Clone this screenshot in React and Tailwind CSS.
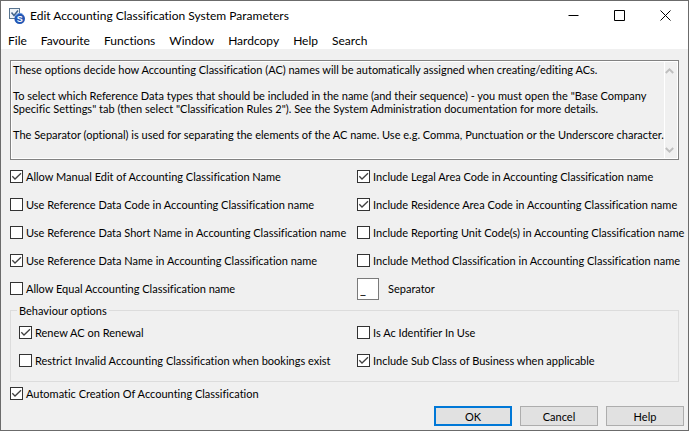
import { useState } from 'react'

const MENUS = ['File', 'Favourite', 'Functions', 'Window', 'Hardcopy', 'Help', 'Search']

const HELP_TEXT = `These options decide how Accounting Classification (AC) names will be automatically assigned when creating/editing ACs.

To select which Reference Data types that should be included in the name (and their sequence) - you must open the "Base Company
Specific Settings" tab (then select "Classification Rules 2"). See the System Administration documentation for more details.

The Separator (optional) is used for separating the elements of the AC name. Use e.g. Comma, Punctuation or the Underscore character.`

const NAME_OPTIONS = [
  { label: 'Allow Manual Edit of Accounting Classification Name', checked: true },
  { label: 'Include Legal Area Code in Accounting Classification name', checked: true },
  { label: 'Use Reference Data Code in Accounting Classification name', checked: false },
  { label: 'Include Residence Area Code in Accounting Classification name', checked: true },
  { label: 'Use Reference Data Short Name in Accounting Classification name', checked: false },
  { label: 'Include Reporting Unit Code(s) in Accounting Classification name', checked: false },
  { label: 'Use Reference Data Name in Accounting Classification name', checked: true },
  { label: 'Include Method Classification in Accounting Classification name', checked: false },
  { label: 'Allow Equal Accounting Classification name', checked: false },
]

const BEHAVIOUR_OPTIONS = [
  { label: 'Renew AC on Renewal', checked: true },
  { label: 'Is Ac Identifier In Use', checked: false },
  { label: 'Restrict Invalid Accounting Classification when bookings exist', checked: false },
  { label: 'Include Sub Class of Business when applicable', checked: true },
]

function AppIcon() {
  return (
    <svg width="18" height="18" viewBox="0 0 18 18" aria-hidden="true">
      <rect x="1.5" y="1.5" width="10" height="10" fill="#eef3f8" stroke="#58748f" />
      <path d="M3.5 5.5l2.5 3 4-5" fill="none" stroke="#41648c" strokeWidth="1.5" />
      <circle cx="11.7" cy="11.7" r="5.3" fill="#2257b5" />
      <path d="M7.7 9.2a4.5 4.5 0 0 1 7.5-1.5" fill="none" stroke="#5f93e0" />
      <text x="11.7" y="15" textAnchor="middle" fontSize="9" fontWeight="bold" fontFamily="Liberation Sans, sans-serif" fill="#fff">
        S
      </text>
    </svg>
  )
}

function CaptionButton({ label, children }) {
  return (
    <button type="button" aria-label={label} className="flex h-full w-[46px] items-center justify-center hover:bg-[#e5e5e5]">
      <svg width="11" height="11" viewBox="0 0 11 11" fill="none" stroke="#000">
        {children}
      </svg>
    </button>
  )
}

function CheckOption({ label, checked }) {
  const [on, setOn] = useState(checked)

  return (
    <label className="flex h-[23px] items-center gap-[3px] whitespace-nowrap">
      <span className="grid size-[13px] shrink-0">
        <input
          type="checkbox"
          className="peer col-start-1 row-start-1 size-[13px] appearance-none border border-[#333333] bg-white"
          checked={on}
          onChange={(e) => setOn(e.target.checked)}
        />
        <svg
          className="pointer-events-none invisible col-start-1 row-start-1 peer-checked:visible"
          width="13"
          height="13"
          viewBox="0 0 13 13"
          fill="none"
          stroke="#404040"
          strokeWidth="1.3"
        >
          <path d="M2.3 6.2l2.7 2.8 6-5.8" />
        </svg>
      </span>
      {label}
    </label>
  )
}

function ScrollButton({ label, d }) {
  return (
    <button type="button" aria-label={label} disabled className="flex h-[17px] items-center">
      <svg width="9" height="6" viewBox="0 0 9 6" fill="none" stroke="#bfbfbf" strokeWidth="2">
        <path d={d} />
      </svg>
    </button>
  )
}

function PushButton({ children, primary }) {
  return (
    <button
      type="button"
      className={`h-5 w-[78px] bg-[#e1e1e1] text-center ${primary ? 'border-2 border-[#0078d7]' : 'border border-[#adadad]'}`}
    >
      {children}
    </button>
  )
}

export default function App() {
  const [separator, setSeparator] = useState('_')

  return (
    <div className="flex min-h-screen flex-col border border-[#6b6b6b] bg-[#f0f0f0] font-[Lato,Arial,sans-serif] text-[11px] leading-[13px] text-black [font-variant-ligatures:none]">
      <header className="bg-white text-[12px]">
        <div className="flex h-[29px] items-center pl-[7px]">
          <AppIcon />
          <h1 className="ml-1 flex-1 whitespace-nowrap">Edit Accounting Classification System Parameters</h1>
          <CaptionButton label="Minimize">
            <path d="M0.5 5.5h10" />
          </CaptionButton>
          <CaptionButton label="Maximize">
            <path d="M0.5 0.5h10v10h-10z" />
          </CaptionButton>
          <CaptionButton label="Close">
            <path d="M0.5 0.5l10 10M10.5 0.5l-10 10" />
          </CaptionButton>
        </div>
        <nav className="flex h-[19px] items-center pt-[2px]">
          {MENUS.map((menu) => (
            <button key={menu} type="button" className="px-[7px]">
              {menu}
            </button>
          ))}
        </nav>
      </header>

      <main className="flex flex-col px-[9px] pt-[11px]">
        <div className="flex h-[100px] border border-[#828282]">
          <textarea
            readOnly
            aria-label="Description"
            className="flex-1 resize-none overflow-hidden border-y border-l border-white py-px pl-px outline-none"
            value={HELP_TEXT}
          />
          <div className="flex w-[14px] flex-col justify-between border border-white">
            <ScrollButton label="Scroll up" d="M0.8 5l3.7-3.6L8.2 5" />
            <ScrollButton label="Scroll down" d="M0.8 1l3.7 3.6L8.2 1" />
          </div>
        </div>

        <div className="mt-[5px] grid grid-cols-[minmax(0,347fr)_minmax(0,322fr)] gap-y-[5px]">
          {NAME_OPTIONS.map((option) => (
            <CheckOption key={option.label} {...option} />
          ))}
          <div className="flex h-[23px] items-end gap-[9px]">
            <input
              id="separator"
              type="text"
              maxLength={1}
              className="size-[22px] border border-[#7a7a7a] bg-white px-[2px] text-[13px] outline-none"
              value={separator}
              onChange={(e) => setSeparator(e.target.value)}
            />
            <label htmlFor="separator" className="self-center">
              Separator
            </label>
          </div>
        </div>

        <fieldset className="mt-1 min-w-0 border border-[#dcdcdc] pt-1 pb-[9px] pl-2">
          <legend className="-ml-[2px] px-[2px]">Behaviour options</legend>
          <div className="grid grid-cols-[minmax(0,338fr)_minmax(0,321fr)] gap-y-[5px]">
            {BEHAVIOUR_OPTIONS.map((option) => (
              <CheckOption key={option.label} {...option} />
            ))}
          </div>
        </fieldset>

        <CheckOption label="Automatic Creation Of Accounting Classification" checked />
      </main>

      <footer className="flex justify-end gap-2 px-1 pt-px pb-1">
        <PushButton primary>OK</PushButton>
        <PushButton>Cancel</PushButton>
        <PushButton>Help</PushButton>
      </footer>
    </div>
  )
}
